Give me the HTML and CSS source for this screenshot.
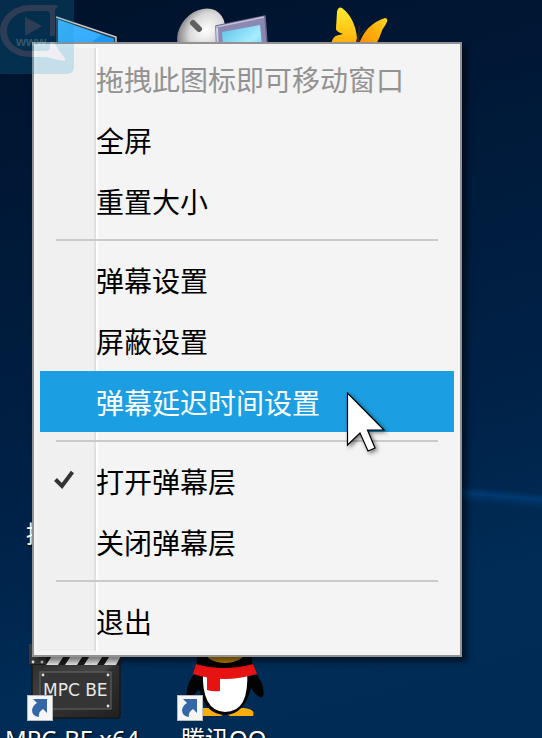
FILE: index.html
```html
<!DOCTYPE html>
<html lang="zh-CN">
<head>
<meta charset="utf-8">
<meta name="viewport" content="width=device-width, initial-scale=1">
<title>桌面</title>
<link rel="stylesheet" href="styles.css">
</head>
<body>
<main class="desktop">
  <svg class="beam" viewBox="0 0 120 60" aria-hidden="true">
    <defs>
      <linearGradient id="beam" x1="0" y1="0" x2="0" y2="1">
        <stop offset="0" stop-color="#00509a" stop-opacity="0"/>
        <stop offset=".4" stop-color="#00509a" stop-opacity=".45"/>
        <stop offset="1" stop-color="#00407c" stop-opacity="0"/>
      </linearGradient>
    </defs>
    <path d="M0 3 H120 V20 H0Z" transform="skewY(5)" fill="url(#beam)"/>
  </svg>

  <svg class="icon computer" viewBox="0 0 64 50" aria-hidden="true">
    <defs>
      <linearGradient id="screen" x1="0" y1="0" x2="1" y2="1">
        <stop offset="0" stop-color="#42b4ff"/><stop offset=".55" stop-color="#35adfd"/><stop offset=".56" stop-color="#189af5"/><stop offset="1" stop-color="#189af5"/>
      </linearGradient>
    </defs>
    <path d="M1 2 L59 22 V50 H1Z" fill="url(#screen)" stroke="#353b42" stroke-width="2"/>
    <path d="M0 1 L60 21 V50" fill="none" stroke="#c5ccd2" stroke-width="1.5"/>
  </svg>

  <svg class="icon network" viewBox="0 0 100 50" aria-hidden="true">
    <defs>
      <radialGradient id="dish" cx=".55" cy=".4" r=".6">
        <stop offset="0" stop-color="#fff"/><stop offset=".6" stop-color="#d8d8d8"/><stop offset="1" stop-color="#858585"/>
      </radialGradient>
      <linearGradient id="lcd" x1="0" y1="0" x2="1" y2="1">
        <stop offset="0" stop-color="#59bfe9"/><stop offset=".6" stop-color="#a8eeff"/><stop offset="1" stop-color="#60c0ee"/>
      </linearGradient>
    </defs>
    <ellipse cx="27" cy="27" rx="21" ry="27" transform="rotate(42 27 27)" fill="url(#dish)"/>
    <path d="M19 17 L25 23" stroke="#606060" stroke-width="6" stroke-linecap="round"/>
    <path d="M42 20 L91 10 L94 50 H43Z" fill="#8b88b2" stroke="#65638b" stroke-width="1.5" stroke-linejoin="round"/>
    <path d="M42 21 L90 11" stroke="#c4c2d9" stroke-width="1.5"/>
    <path d="M43 22 L44 50" stroke="#d4d2e4" stroke-width="2"/>
    <path d="M48 26 L86 19 L89 50 H50Z" fill="url(#lcd)"/>
  </svg>

  <svg class="icon butterfly" viewBox="0 0 64 50" aria-hidden="true">
    <defs>
      <linearGradient id="wing" x1="0" y1="0" x2="0" y2="1">
        <stop offset="0" stop-color="#ffec2c"/><stop offset="1" stop-color="#ff9b00"/>
      </linearGradient>
      <linearGradient id="wing2" x1="0" y1="1" x2="1" y2="0">
        <stop offset="0" stop-color="#ff8500"/><stop offset=".6" stop-color="#ffae09"/><stop offset="1" stop-color="#ffd624"/>
      </linearGradient>
    </defs>
    <path d="M7 6 Q8 0 12 2 Q25 12 27 32 L28 50 H1 Q-1 30 9 29 L13 28 Q5 25 6 22Z" fill="url(#wing)"/>
    <path d="M29 38 Q36 18 55 12 Q59 12 56 18 Q52 23 50 30 Q47 38 38 50 H28Z" fill="url(#wing2)"/>
    <path d="M28 31 L26 50 M28 31 Q30 24 29 20 M29 31 Q31 26 35 24" fill="none" stroke="#3b2c23" stroke-width="1"/>
    <ellipse cx="28" cy="38" rx="2" ry="7" fill="#4c2710"/>
  </svg>

  <span class="label label-panel">控</span>

  <svg class="icon clapper" viewBox="0 0 100 80" aria-hidden="true">
    <defs>
      <linearGradient id="slate" x1="0" y1="0" x2="1" y2="1">
        <stop offset="0" stop-color="#2d2d2d"/><stop offset=".5" stop-color="#474747"/><stop offset=".55" stop-color="#303030"/><stop offset="1" stop-color="#202020"/>
      </linearGradient>
    </defs>
    <rect x="5" y="18" width="88" height="60" rx="3" fill="url(#slate)" stroke="#171717" stroke-width="1.5"/>
    <path d="M2 4 L94 14 V25 H2Z" fill="#1d1d1d"/>
    <rect x="2" y="4" width="17" height="20" fill="#393939"/>
    <path d="M26 14 H38 L31 25 H19Z M45 14 H57 L50 25 H38Z M64 14 H77 L70 25 H57Z M84 14 H94 V16 L89 25 H77Z" fill="#f1f1f1"/>
    <rect x="13" y="32" width="71" height="37" fill="#353535" stroke="#686868" stroke-width="1"/>
    <g fill="#e0e0e0"><circle cx="6" cy="22" r="1.4"/><circle cx="15" cy="22" r="1.4"/><circle cx="16" cy="35" r="1.4"/><circle cx="81" cy="35" r="1.4"/><circle cx="81" cy="66" r="1.4"/></g>
    <text class="slate-text" x="16" y="56">MPC BE</text>
  </svg>
  <svg class="shortcut shortcut-mpc" viewBox="0 0 26 26" aria-hidden="true">
    <rect x=".5" y=".5" width="25" height="25" fill="#f6f6f6" stroke="#b9b9b9"/>
    <path d="M6 4 H20 V18 L16 14 Q11 17 12 22 Q5 21 5 15 Q6 10 10 8Z" fill="#3567a8"/>
  </svg>
  <span class="label label-mpc">MPC-BE x64</span>

  <svg class="icon penguin" viewBox="0 0 80 76" aria-hidden="true">
    <path d="M18 66 Q3 67 5 74 H35 L39 71 L44 74 H67 Q70 67 57 66Z" fill="#fbae0b"/>
    <path d="M11 0 H64 L67 28 Q80 43 77 54 Q74 59 65 46 Q58 73 39 73 Q20 73 13 47 Q5 58 1 55 Q-1 42 11 28Z" fill="#030303"/>
    <path d="M17 28 H61 Q64 70 39 70 Q15 69 17 28Z" fill="#fff"/>
    <ellipse cx="39" cy="8" rx="21" ry="13" fill="#c68907"/>
    <path d="M10 22 Q38 30 67 22 L71 32 Q38 42 7 32Z" fill="#e71312"/>
    <path d="M21 34 H34 V49 Q27 50 21 48Z" fill="#e71312"/>
  </svg>
  <svg class="shortcut shortcut-qq" viewBox="0 0 26 26" aria-hidden="true">
    <rect x=".5" y=".5" width="25" height="25" fill="#f6f6f6" stroke="#b9b9b9"/>
    <path d="M6 4 H20 V18 L16 14 Q11 17 12 22 Q5 21 5 15 Q6 10 10 8Z" fill="#3567a8"/>
  </svg>
  <span class="label label-qq">腾讯QQ</span>

  <div class="menu" role="menu">
    <button class="item" type="button" role="menuitem" disabled>拖拽此图标即可移动窗口</button>
    <button class="item" type="button" role="menuitem">全屏</button>
    <button class="item" type="button" role="menuitem">重置大小</button>
    <hr class="separator">
    <button class="item" type="button" role="menuitem">弹幕设置</button>
    <button class="item" type="button" role="menuitem">屏蔽设置</button>
    <button class="item item-active" type="button" role="menuitem">弹幕延迟时间设置</button>
    <hr class="separator">
    <button class="item" type="button" role="menuitemcheckbox" aria-checked="true">
      <svg class="check" viewBox="0 0 20 20" aria-hidden="true"><path d="M1.5 9.5 L8 16 L18.5 2" fill="none" stroke="#333" stroke-width="4"/></svg>打开弹幕层</button>
    <button class="item" type="button" role="menuitemcheckbox" aria-checked="false">关闭弹幕层</button>
    <hr class="separator">
    <button class="item" type="button" role="menuitem">退出</button>
  </div>

  <svg class="watermark" viewBox="0 0 74 74" aria-hidden="true">
    <defs>
      <g id="bubble">
        <path d="M57 5 H28 C12 6 0 18 0 31 C0 46 14 57 29 57 H46 Q56 60 65 61 Q66 60 64 57 Q58 50 54 42 H50 V47 Q50 51 46 51 H30 C18 51 7 43 7 31 C7 20 17 12 29 11 H46 Q50 11 50 15 V36 H55 V11 Q55 8 58 7Z"/>
        <path d="M25 17 L42 26 L25 36Z" stroke-width="1" stroke-linejoin="round"/>
      </g>
      <mask id="cutout">
        <rect width="74" height="74" fill="#fff"/>
        <use href="#bubble" fill="#000"/>
      </mask>
    </defs>
    <path d="M0 0 H74 V66 Q74 74 66 74 H0Z" fill="#139acc" fill-opacity=".2" mask="url(#cutout)"/>
    <use href="#bubble" fill="#e4e4ff" fill-opacity=".2"/>
    <text class="watermark-text" x="16" y="46">www</text>
  </svg>

  <svg class="cursor" viewBox="0 0 42 64" aria-hidden="true">
    <path d="M1.5 1 V53 L14 41 L22 59 L29 56 L21.5 38 H38Z" fill="#fff" stroke="#000" stroke-width="1.2"/>
  </svg>
</main>
</body>
</html>
```

FILE: styles.css
```css
* {
  box-sizing: border-box;
}

body {
  margin: 0;
  font-family: "Noto Sans CJK SC", sans-serif;
}

.desktop {
  position: relative;
  min-height: 100vh;
  padding: 42px 80px 80px 32px;
  overflow: hidden;
  background: linear-gradient(165deg, #00122b 0%, #001a3a 30%, #002248 60%, #002c56 80%, #002b55 100%);
}

.desktop > svg,
.label {
  position: absolute;
}

.beam { left: 452px; top: 482px; width: 120px; height: 60px; }

.computer { left: 56px; top: 16px; width: 64px; height: 50px; }
.network { left: 174px; top: 6px; width: 100px; height: 50px; }
.butterfly { left: 330px; top: 6px; width: 64px; height: 50px; }
.clapper { left: 27px; top: 640px; width: 100px; height: 80px; }
.penguin { left: 186px; top: 642px; width: 80px; height: 76px; }

.shortcut { width: 26px; height: 26px; }
.shortcut-mpc { left: 27px; top: 695px; }
.shortcut-qq { left: 177px; top: 695px; }

.slate-text {
  fill: #e8e8e8;
  font: 17px "DejaVu Sans", sans-serif;
}

.label {
  color: #fff;
  font: 24px/32px "Noto Sans", "Noto Sans CJK SC", sans-serif;
  white-space: nowrap;
  text-shadow: 1px 1px 2px #000;
}

.label-panel { left: 26px; top: 518px; }
.label-mpc { left: 5px; top: 723px; }
.label-qq { left: 181px; top: 723px; }

.menu {
  position: relative;
  display: flex;
  flex-direction: column;
  padding: 4px 6px;
  border: 2px solid #929292;
  background: linear-gradient(90deg, #f4f4f4 3px, #f0f0f0 3px 60px, #e0e0e0 60px 62px, #fff 62px 64px, #f4f4f4 64px) 0 4px / 100% calc(100% - 8px) no-repeat #f4f4f4;
  box-shadow: 5px 5px 6px rgba(0, 0, 0, 0.5);
}

.item {
  position: relative;
  height: 61px;
  padding: 0 16px 0 56px;
  border: 0;
  background: none;
  color: #000;
  font: 28px/56px "Noto Sans CJK SC", sans-serif;
  text-align: left;
  white-space: nowrap;
}

.item:disabled {
  color: #929292;
}

.item-active {
  background: #1c9fe2;
  color: #fff;
}

.separator {
  align-self: stretch;
  height: 2px;
  margin: 8px 16px;
  border: 0;
  background: #cacaca;
}

.check {
  position: absolute;
  left: 14px;
  top: 20px;
  width: 20px;
  height: 20px;
}

.cursor {
  left: 346px;
  top: 392px;
  width: 42px;
  height: 64px;
  filter: drop-shadow(2px 2px 2px rgba(0, 0, 0, 0.5));
}

.watermark {
  left: 0;
  top: 0;
  width: 74px;
  height: 74px;
}

.watermark-text {
  fill: #fff;
  fill-opacity: 0.2;
  font: bold 13px "Liberation Sans", sans-serif;
}
```
